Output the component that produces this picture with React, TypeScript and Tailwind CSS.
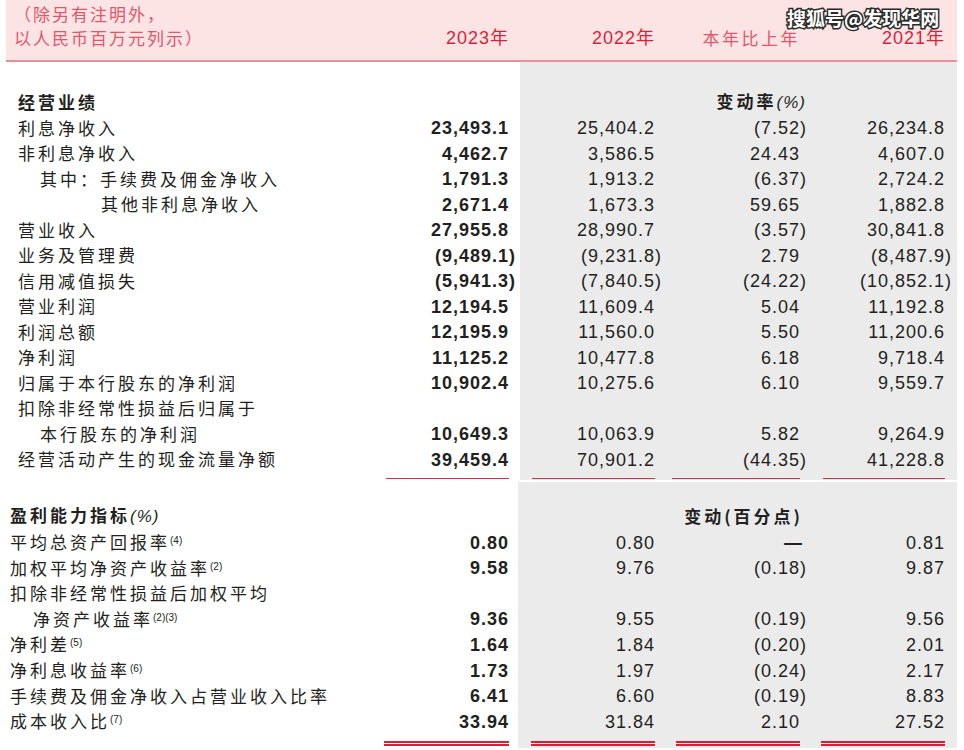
import React from 'react';

type Row = {
  label: string;
  sup?: string;
  indent?: 0 | 1 | 2;
  values?: [string, string, string, string];
};

const performance: Row[] = [
  { label: '利息净收入', values: ['23,493.1', '25,404.2', '(7.52)', '26,234.8'] },
  { label: '非利息净收入', values: ['4,462.7', '3,586.5', '24.43', '4,607.0'] },
  { label: '其中：手续费及佣金净收入', indent: 1, values: ['1,791.3', '1,913.2', '(6.37)', '2,724.2'] },
  { label: '其他非利息净收入', indent: 2, values: ['2,671.4', '1,673.3', '59.65', '1,882.8'] },
  { label: '营业收入', values: ['27,955.8', '28,990.7', '(3.57)', '30,841.8'] },
  { label: '业务及管理费', values: ['(9,489.1)', '(9,231.8)', '2.79', '(8,487.9)'] },
  { label: '信用减值损失', values: ['(5,941.3)', '(7,840.5)', '(24.22)', '(10,852.1)'] },
  { label: '营业利润', values: ['12,194.5', '11,609.4', '5.04', '11,192.8'] },
  { label: '利润总额', values: ['12,195.9', '11,560.0', '5.50', '11,200.6'] },
  { label: '净利润', values: ['11,125.2', '10,477.8', '6.18', '9,718.4'] },
  { label: '归属于本行股东的净利润', values: ['10,902.4', '10,275.6', '6.10', '9,559.7'] },
  { label: '扣除非经常性损益后归属于' },
  { label: '本行股东的净利润', indent: 1, values: ['10,649.3', '10,063.9', '5.82', '9,264.9'] },
  { label: '经营活动产生的现金流量净额', values: ['39,459.4', '70,901.2', '(44.35)', '41,228.8'] },
];

const profitability: Row[] = [
  { label: '平均总资产回报率', sup: '(4)', values: ['0.80', '0.80', '—', '0.81'] },
  { label: '加权平均净资产收益率', sup: '(2)', values: ['9.58', '9.76', '(0.18)', '9.87'] },
  { label: '扣除非经常性损益后加权平均' },
  { label: '净资产收益率', sup: '(2)(3)', indent: 1, values: ['9.36', '9.55', '(0.19)', '9.56'] },
  { label: '净利差', sup: '(5)', values: ['1.64', '1.84', '(0.20)', '2.01'] },
  { label: '净利息收益率', sup: '(6)', values: ['1.73', '1.97', '(0.24)', '2.17'] },
  { label: '手续费及佣金净收入占营业收入比率', values: ['6.41', '6.60', '(0.19)', '8.83'] },
  { label: '成本收入比', sup: '(7)', values: ['33.94', '31.84', '2.10', '27.52'] },
];

const cjk = "font-['Noto_Sans_CJK_SC',sans-serif]";
const num = "font-['Liberation_Sans','Noto_Sans_CJK_SC',sans-serif]";

// closing paren hangs past the column edge, like in the printed report
const Num = ({ v }: { v: string }) =>
  v.endsWith(')') ? (
    <>
      {v.slice(0, -1)}
      <span className="-mr-[7px]">)</span>
    </>
  ) : (
    <>{v}</>
  );

// the five columns: label | 2023 (white) | gray block with 2022, change, 2021
const Cols = ({
  second,
  height,
  label,
  c1,
  c2,
  c3,
  c4,
  align = 'items-center',
}: {
  second?: boolean;
  height: string;
  label?: React.ReactNode;
  c1?: React.ReactNode;
  c2?: React.ReactNode;
  c3?: React.ReactNode;
  c4?: React.ReactNode;
  align?: string;
}) => (
  <div className={`flex ${height}`}>
    <div className={`flex min-w-0 flex-1 ${align}`}>{label}</div>
    <div className={`flex w-[130px] justify-end ${align}`}>{c1}</div>
    <div
      className={`flex ${second ? 'ml-[9px] w-[439px]' : 'ml-[11px] w-[437px]'} bg-[#ebebeb] pr-[12px] ${align}`}
    >
      <div className={`flex ${second ? 'w-[137px]' : 'w-[135px]'} justify-end`}>{c2}</div>
      <div className="flex w-[145px] justify-end">{c3}</div>
      <div className="flex w-[145px] justify-end">{c4}</div>
    </div>
    <div className="w-[7px]" />
  </div>
);

const indentClass = (second: boolean, indent?: number) => {
  if (second) return indent === 1 ? 'pl-[33px]' : 'pl-[10px]';
  if (indent === 1) return 'pl-[40px]';
  if (indent === 2) return 'pl-[101px]';
  return 'pl-[18px]';
};

const DataRow = ({ row, second }: { row: Row; second?: boolean }) => {
  const cell = `${num} text-[18px] leading-none tracking-[1px] text-[#231f20] whitespace-nowrap`;
  return (
    <Cols
      second={second}
      height={second ? 'h-[25.6px]' : 'h-[25.5px]'}
      label={
        <span
          className={`${cjk} ${indentClass(!!second, row.indent)} -mt-[2px] whitespace-nowrap text-[17px] leading-none tracking-[3px] text-[#231f20]`}
        >
          {row.label}
          {row.sup && (
            <sup className={`${num} text-[10px] tracking-normal`}>{row.sup}</sup>
          )}
        </span>
      }
      c1={
        row.values && (
          <span className={`${cell} font-bold`}>
            <Num v={row.values[0]} />
          </span>
        )
      }
      c2={row.values && <span className={cell}><Num v={row.values[1]} /></span>}
      c3={
        row.values &&
        (row.values[2] === '—' ? (
          <span className={`${cjk} -mr-[3px] -mt-[5px] text-[22px] font-bold leading-none text-[#231f20]`}>—</span>
        ) : (
          <span className={cell}><Num v={row.values[2]} /></span>
        ))
      }
      c4={row.values && <span className={cell}><Num v={row.values[3]} /></span>}
    />
  );
};

const Header = () => {
  const year = `${num} text-[18px] leading-[24px] tracking-[1px] text-[#d91f3a] whitespace-nowrap`;
  return (
    <div className="relative ml-[6px] h-[62px] w-[951px] border-b-2 border-[#e8919c] bg-[#fde4e4] pt-[2px]">
      <div className={`${cjk} pl-[8px] text-[17px] leading-[24px] tracking-[2px] text-[#e0576c]`}>
        （除另有注明外，
      </div>
      <div className="flex">
        <div className={`${cjk} flex-1 pl-[8px] text-[17px] leading-[24px] tracking-[2px] text-[#e0576c]`}>
          以人民币百万元列示）
        </div>
        <div className="flex w-[130px] justify-end">
          <span className={year}>2023年</span>
        </div>
        <div className="ml-[11px] flex pr-[12px]">
          <div className="flex w-[135px] justify-end">
            <span className={year}>2022年</span>
          </div>
          <div className="flex w-[145px] justify-end">
            <span className={`${cjk} text-[17px] leading-[24px] tracking-[2.5px] text-[#e0576c]`}>本年比上年</span>
          </div>
          <div className="flex w-[145px] justify-end">
            <span className={year}>2021年</span>
          </div>
        </div>
      </div>
      {/* watermark */}
      <div
        className={`${cjk} absolute left-[781px] top-[4px] text-[19px] font-bold leading-[28px] text-white [-webkit-text-stroke:3px_#2a2a2a] [paint-order:stroke_fill]`}
      >
        搜狐号@发现华网
      </div>
    </div>
  );
};

const Line = ({ w, double }: { w: string; double?: boolean }) =>
  double ? (
    <div className={`${w} h-[5px] border-y-2 border-[#d81f3a]`} />
  ) : (
    <div className={`${w} h-px bg-[#d92f48]`} />
  );

export default function App() {
  return (
    <div className="relative h-[750px] w-[964px] overflow-hidden bg-white">
      <Header />

      {/* 经营业绩 */}
      <Cols height="h-[27.75px]" />
      <Cols
        height="h-[25.5px]"
        label={
          <span className={`${cjk} -mt-[2px] pl-[18px] text-[17px] font-bold leading-none tracking-[3px] text-[#231f20]`}>
            经营业绩
          </span>
        }
        c3={
          <span className={`${cjk} -mr-[6px] -mt-[2px] whitespace-nowrap text-[17px] font-bold leading-none tracking-[3px] text-[#231f20]`}>
            变动率<span className={`${num} italic font-normal tracking-[1px]`}>(%)</span>
          </span>
        }
      />
      {performance.map((r) => (
        <DataRow key={r.label} row={r} />
      ))}
      <Cols
        height="h-[7.75px]"
        align="items-start"
        c1={<div className="mt-[5.75px]"><Line w="w-[123px]" /></div>}
        c2={<div className="mt-[5.75px]"><Line w="w-[123px]" /></div>}
        c3={<div className="mt-[5.75px]"><Line w="w-[128px]" /></div>}
        c4={<div className="mt-[5.75px]"><Line w="w-[122px]" /></div>}
      />

      <div className="h-[2px]" />

      {/* 盈利能力指标 */}
      <Cols second height="h-[22.2px]" />
      <Cols
        second
        height="h-[25.6px]"
        label={
          <span className={`${cjk} -mt-[2px] whitespace-nowrap pl-[10px] text-[17px] font-bold leading-none tracking-[3px] text-[#231f20]`}>
            盈利能力指标<span className={`${num} italic font-normal tracking-[1px]`}>(%)</span>
          </span>
        }
        c3={
          <span className={`${cjk} -mt-[2px] -mr-[3px] whitespace-nowrap text-[17px] font-bold leading-none tracking-[3px] text-[#231f20]`}>
            变动(百分点)
          </span>
        }
      />
      {profitability.map((r) => (
        <DataRow key={r.label} row={r} second />
      ))}
      <Cols
        second
        height="h-[13px]"
        align="items-start"
        c1={<div className="mt-[6.4px]"><Line double w="w-[125px]" /></div>}
        c2={<div className="mt-[6.4px]"><Line double w="w-[124px]" /></div>}
        c3={<div className="mt-[6.4px]"><Line double w="w-[124px]" /></div>}
        c4={<div className="mt-[6.4px]"><Line double w="w-[124px]" /></div>}
      />
    </div>
  );
}
